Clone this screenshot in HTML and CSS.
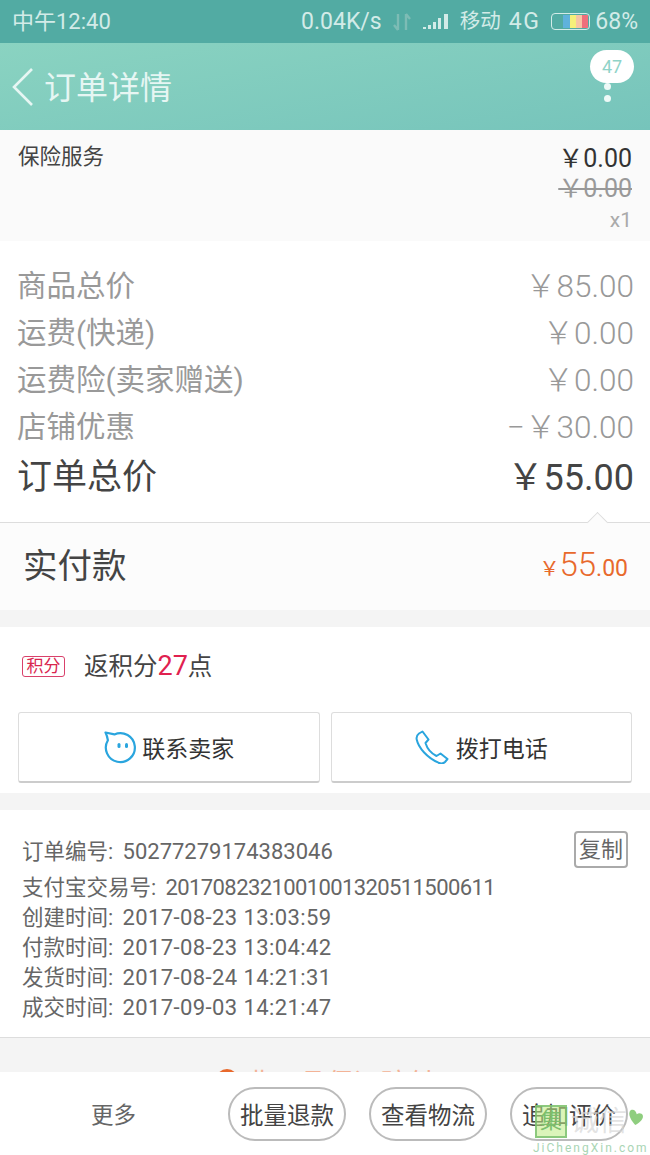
FILE: index.html
```html
<!DOCTYPE html>
<html lang="zh-CN">
<head>
  <meta charset="UTF-8" />
  <meta name="viewport" content="width=device-width, initial-scale=1.0"/>
  <title>订单详情</title>
  <link rel="stylesheet" href="styles.css">
</head>
<body>
  <div class="page">
    <div class="status-bar">
      <span class="status-time">中午12:40</span>
      <div class="status-right">
        <span class="net-speed">0.04K/s</span>
        <svg width="20" height="22" viewBox="0 0 20 22"><path d="M6 3v16M6 19l-4-5M14 19V3M14 3l4 5" fill="none" stroke="#7dbcb5" stroke-width="2.4"/></svg>
        <svg width="28" height="20" viewBox="0 0 28 20"><path d="M1 15h3v2H1zM6 13h3v4H6zM11 10h3v7h-3zM16 6h3v11h-3zM22 2h4v15h-4z" fill="#d3ebe8"/></svg>
        <span class="carrier">移动</span>
        <span class="net-type">4G</span>
        <span class="battery"><i class="cell-blue"></i><i class="cell-yellow"></i><i class="cell-peach"></i><i class="cell-red"></i></span>
        <span class="battery-pct">68%</span>
      </div>
    </div>

    <div class="nav-bar">
      <svg class="back-icon" width="24" height="40" viewBox="0 0 24 40"><path d="M21 2L3 20l18 18" fill="none" stroke="#e6f6f3" stroke-width="2.6"/></svg>
      <span class="nav-title">订单详情</span>
      <div class="nav-more">
        <span class="bubble">47</span>
        <i class="dot"></i>
        <i class="dot"></i>
      </div>
    </div>

    <div class="item-row">
      <span class="item-name">保险服务</span>
      <div class="item-prices">
        <span class="price-now">￥0.00</span>
        <span class="price-old">￥0.00</span>
        <span class="price-qty">x1</span>
      </div>
    </div>

    <div class="summary">
      <div class="summary-row"><span class="label">商品总价</span><span class="amount">￥85.00</span></div>
      <div class="summary-row"><span class="label">运费(快递)</span><span class="amount">￥0.00</span></div>
      <div class="summary-row"><span class="label">运费险(卖家赠送)</span><span class="amount">￥0.00</span></div>
      <div class="summary-row"><span class="label">店铺优惠</span><span class="amount">−￥30.00</span></div>
      <div class="summary-row total"><span class="label">订单总价</span><span class="amount">￥55.00</span></div>
    </div>

    <div class="paid">
      <i class="paid-arrow"></i>
      <span class="paid-label">实付款</span>
      <span class="paid-amount"><small class="paid-yen">￥</small>55<small>.00</small></span>
    </div>

    <div class="points-card">
      <div class="points">
        <span class="points-tag">积分</span>
        <span class="points-text">返积分<em>27</em>点</span>
      </div>
      <div class="contact-btns">
        <a class="contact-btn">
          <svg width="34" height="34" viewBox="0 0 34 34"><path d="M2.500 2.500L11.400 4.400A14.500 14.500 0 1 1 4.900 10.200C4.500 8 3.800 5 2.500 2.500z" fill="none" stroke="#2aa5de" stroke-width="2.200" stroke-linejoin="round"/><rect x="14.500" y="13" width="3" height="5" rx="1.500" fill="#2aa5de"/><rect x="22" y="13" width="3" height="5" rx="1.500" fill="#2aa5de"/></svg>
          联系卖家
        </a>
        <a class="contact-btn">
          <svg width="36" height="34" viewBox="0 0 36 34"><path d="M4 3.500l3.500-2 6 8-3 3.500c1.500 5 6 10.500 11 13l4-2.500 7 5.500-2.500 3c-1.500 1.500-4 1.700-6.500.7C12.500 28 3.500 18 1.700 9.500 1.200 7 2 5 4 3.500z" fill="none" stroke="#2aa5de" stroke-width="2" stroke-linejoin="round"/></svg>
          拨打电话
        </a>
      </div>
    </div>

    <div class="order-info">
      <div class="order-no">
        <span class="order-no-text">订单编号: <b>50277279174383046</b></span>
        <span class="copy-btn">复制</span>
      </div>
      <p>支付宝交易号: <b class="trade-no">2017082321001001320511500611</b></p>
      <p>创建时间: <b class="date">2017-08-23 13:03:59</b></p>
      <p>付款时间: <b class="date">2017-08-23 13:04:42</b></p>
      <p>发货时间: <b class="date">2017-08-24 14:21:31</b></p>
      <p>成交时间: <b class="date">2017-09-03 14:21:47</b></p>
    </div>

    <div class="peek">
      <span class="peek-inner"><i class="peek-icon"></i>非正品保证赔付</span>
    </div>

    <div class="bottom-bar">
      <span class="more">更多</span>
      <a class="pill">批量退款</a>
      <a class="pill">查看物流</a>
      <a class="pill">追加评价</a>
    </div>

    <div class="watermark">
      <div class="wm-logo">
        <span class="wm-box">集</span>
        <span class="wm-name">诚信</span>
        <svg class="wm-heart" width="20" height="22" viewBox="0 0 26 26"><path d="M6 3c4-2 7 1 8 5 3-2 7-1 8 2 1 5-7 11-10 12C8 18 1 8 6 3z" fill="#8fce7f"/></svg>
      </div>
      <div class="wm-url">JiChengXin.com</div>
    </div>
  </div>
</body>
</html>
```

FILE: styles.css
```css
* {
  box-sizing: border-box;
}

body {
  margin: 0;
  background-color: #fff;
  font-family: Roboto, 'Noto Sans CJK SC', sans-serif;
  color: #333;
}

.page {
  position: relative;
  width: 650px;
  height: 1155px;
  overflow: hidden;
  display: flex;
  flex-direction: column;
  background-color: #f4f4f4;
}

/* Status bar */
.status-bar {
  height: 43px;
  flex-shrink: 0;
  display: flex;
  justify-content: space-between;
  align-items: center;
  padding: 0 12px;
  background-color: #52aba3;
  color: #d3ebe8;
  font-size: 22px;
  line-height: 43px;
}

.status-right {
  display: flex;
  align-items: center;
  gap: 10px;
}

.net-speed,
.net-type,
.battery-pct {
  font-size: 23px;
}

.carrier {
  font-size: 20.5px;
}

.net-type {
  margin-left: -2px;
  letter-spacing: 1.5px;
}

.battery {
  width: 39px;
  height: 17px;
  display: flex;
  padding: 1px 1px 1px 11px;
  margin-left: 1px;
  margin-right: -5px;
  border: 1px solid #d3ebe8;
  border-radius: 4px;
  overflow: hidden;
}

.battery i {
  flex: 1;
}

.cell-blue { background-color: #5fb2dc; }
.cell-yellow { background-color: #f6f07a; }
.cell-peach { background-color: #f7c5a4; }
.cell-red { background-color: #ef6f7c; }

/* Nav bar */
.nav-bar {
  height: 87px;
  flex-shrink: 0;
  display: flex;
  align-items: center;
  padding: 0 16px 0 11px;
  background: linear-gradient(170deg, #8ad3c1 0%, #76c4bb 100%);
}

.nav-title {
  margin-left: 9px;
  padding-top: 4px;
  font-size: 32px;
  line-height: 79px;
  color: #e6f6f3;
}

.nav-more {
  margin-left: auto;
  display: flex;
  flex-direction: column;
  align-items: center;
  align-self: flex-start;
  margin-top: 7px;
}

.bubble {
  width: 44px;
  height: 33px;
  border-radius: 17px;
  background-color: #fff;
  color: #8fd3c8;
  font-size: 18px;
  line-height: 33px;
  text-align: center;
}

.dot {
  width: 7px;
  height: 7px;
  margin-top: 5px;
  border-radius: 50%;
  background-color: #eef9f7;
  position: relative;
  left: -5px;
}

.bubble + .dot {
  margin-top: 0;
}

/* Item row */
.item-row {
  height: 111px;
  flex-shrink: 0;
  display: flex;
  justify-content: space-between;
  padding: 12px 18px 0;
  background-color: #fafafa;
}

.item-name {
  font-size: 21.5px;
  line-height: 30px;
  color: #444;
}

.item-prices {
  display: flex;
  flex-direction: column;
  align-items: flex-end;
}

.price-now {
  font-size: 25px;
  line-height: 34px;
  color: #333;
}

.price-old {
  margin-top: -2px;
  font-size: 25px;
  line-height: 29px;
  color: #999;
  text-decoration: line-through;
}

.price-qty {
  font-size: 21px;
  line-height: 34px;
  color: #aaa;
}

/* Price summary */
.summary {
  height: 282px;
  flex-shrink: 0;
  padding: 22px 16px 0 17px;
  background-color: #fff;
  border-bottom: 1px solid #ddd;
}

.summary-row {
  display: flex;
  justify-content: space-between;
  height: 47px;
  line-height: 47px;
  color: #999;
}

.summary-row .label {
  font-size: 29.5px;
}

.summary-row .amount {
  font-size: 31.5px;
  font-weight: 300;
}

.summary-row.total {
  height: 52px;
  line-height: 54px;
  color: #444;
}

.total .label {
  font-size: 35px;
}

.summary-row.total .amount {
  font-size: 36px;
  font-weight: 400;
}

/* Paid */
.paid {
  position: relative;
  height: 87px;
  flex-shrink: 0;
  display: flex;
  justify-content: space-between;
  align-items: center;
  padding: 0 22px 0 23px;
  background-color: #fcfcfc;
  line-height: 87px;
}

.paid-arrow {
  position: absolute;
  top: -8px;
  right: 45px;
  width: 15px;
  height: 15px;
  background-color: #fcfcfc;
  border-top: 1px solid #ddd;
  border-left: 1px solid #ddd;
  transform: rotate(45deg);
}

.paid-label {
  font-size: 34.5px;
  color: #444;
}

.paid-amount {
  font-size: 33px;
  font-weight: 300;
  color: #e8692c;
}

.paid-amount small {
  font-size: 23px;
  font-weight: 400;
}

.paid-amount .paid-yen {
  font-size: 20px;
}

/* Points and contact */
.points-card {
  height: 166px;
  flex-shrink: 0;
  margin-top: 17px;
  padding: 0 18px;
  background-color: #fff;
}

.points {
  height: 85px;
  display: flex;
  align-items: center;
  padding-left: 4px;
  padding-bottom: 6px;
}

.points-tag {
  width: 43px;
  height: 21px;
  border: 1px solid #d9416b;
  border-radius: 3px;
  font-size: 17px;
  line-height: 19px;
  text-align: center;
  color: #d9264f;
}

.points-text {
  margin-left: 19px;
  font-size: 24.5px;
  line-height: 32px;
  color: #444;
}

.points-text em {
  font-style: normal;
  font-size: 27px;
  color: #e0214f;
}

.contact-btns {
  display: flex;
  gap: 11px;
}

.contact-btn {
  flex: 1;
  height: 71px;
  display: flex;
  align-items: center;
  justify-content: center;
  gap: 5px;
  background-color: #fff;
  border: 1px solid #ddd;
  border-bottom: 2px solid #ccc;
  border-radius: 3px;
  font-size: 23px;
  color: #333;
}

/* Order info */
.order-info {
  height: 228px;
  flex-shrink: 0;
  margin-top: 17px;
  padding: 20px 22px 0 22px;
  background-color: #fff;
  border-bottom: 1px solid #ddd;
  font-size: 21.5px;
  color: #666;
}

.order-info b {
  font-weight: normal;
  font-size: 22px;
  margin-left: 4px;
}

.order-info .date {
  letter-spacing: 0.4px;
}

.order-info .trade-no {
  letter-spacing: -0.6px;
}

.order-no {
  display: flex;
  justify-content: space-between;
  align-items: center;
  height: 39px;
  margin-bottom: 4px;
}

.order-no-text {
  padding-top: 4px;
  line-height: 35px;
}

.order-info p {
  margin: 0;
  height: 30px;
  line-height: 30px;
}

.copy-btn {
  width: 54px;
  height: 37px;
  border: 2px solid #aaa;
  border-radius: 4px;
  text-align: center;
  line-height: 33px;
  font-size: 22px;
}

/* Clipped row under the bottom bar */
.peek {
  height: 34px;
  flex-shrink: 0;
  overflow: hidden;
  background-color: #f4f4f4;
  text-align: center;
  color: #f3b397;
  font-size: 27px;
  line-height: 30px;
  padding-top: 29px;
}

.peek-inner {
  display: inline-flex;
  align-items: flex-start;
  gap: 8px;
}

.peek-icon {
  width: 22px;
  height: 22px;
  border: 3px solid #e8692c;
  border-radius: 50%;
}

/* Bottom bar */
.bottom-bar {
  flex: 1;
  display: flex;
  align-items: center;
  gap: 23px;
  padding: 0 22px 0 91px;
  background-color: #fff;
}

.more {
  padding-top: 4px;
  font-size: 22.5px;
  line-height: 79px;
  color: #666;
  margin-right: auto;
}

.pill {
  width: 118px;
  height: 54px;
  border: 2px solid #bbb;
  border-radius: 27px;
  font-size: 23.5px;
  line-height: 54px;
  text-align: center;
  color: #444;
}

/* Watermark over the corner */
.watermark {
  position: absolute;
  left: 533px;
  top: 1105px;
  width: 117px;
}

.wm-logo {
  display: flex;
  align-items: center;
  height: 33px;
  padding-left: 2px;
}

.wm-box {
  width: 32px;
  height: 33px;
  background-color: rgba(190, 235, 130, 0.55);
  border: 2px solid rgba(120, 190, 110, 0.8);
  color: #7cbf6c;
  font-size: 22px;
  line-height: 27px;
  text-align: center;
}

.wm-name {
  margin-left: 4px;
  font-size: 28px;
  line-height: 32px;
  color: rgba(215, 215, 215, 0.7);
}

.wm-heart {
  position: absolute;
  right: 4px;
  top: 2px;
}

.wm-url {
  margin-top: 3px;
  font-size: 12px;
  line-height: 14px;
  letter-spacing: 2px;
  color: #a9d5b4;
  white-space: nowrap;
}
```
